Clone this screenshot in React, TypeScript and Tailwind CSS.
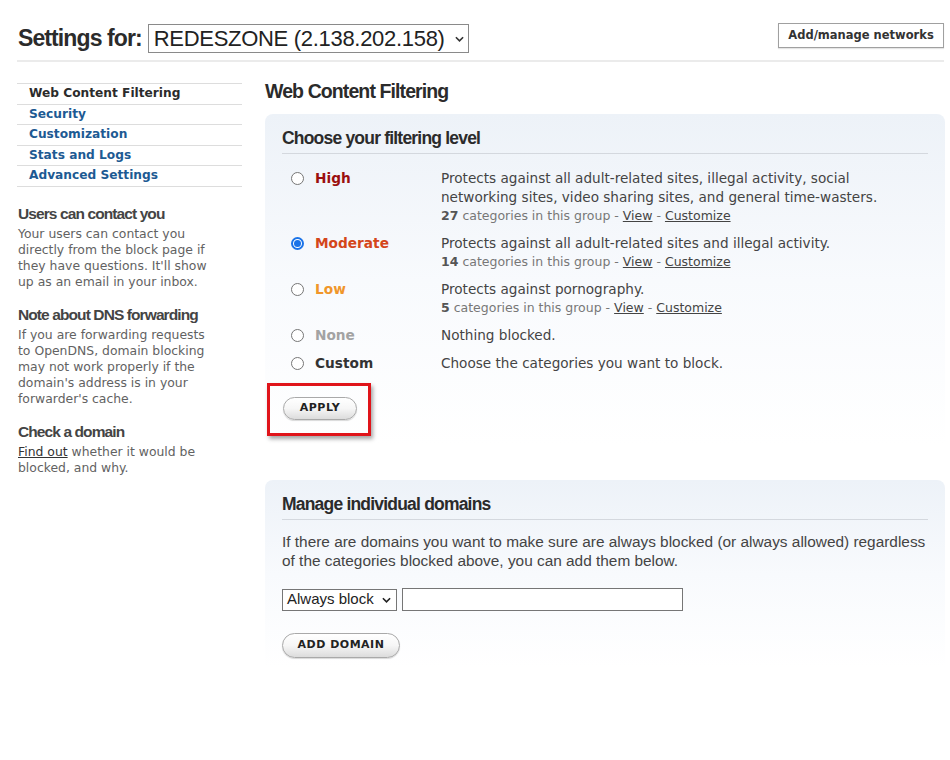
import React from "react";

const verdana = { fontFamily: '"DejaVu Sans", Verdana, sans-serif' };
const arial = { fontFamily: '"Liberation Sans", Arial, sans-serif' };

function Chevron({ className }: { className?: string }) {
  return (
    <svg viewBox="0 0 10 6" className={className} fill="none" stroke="currentColor" strokeWidth="1.8">
      <path d="M1 1l4 4 4-4" />
    </svg>
  );
}

function Radio({ checked }: { checked?: boolean }) {
  if (checked) {
    return (
      <span className="flex h-[13px] w-[13px] items-center justify-center rounded-full border-2 border-[#1a73e8] bg-white">
        <span className="h-[7px] w-[7px] rounded-full bg-[#1a73e8]" />
      </span>
    );
  }
  return <span className="block h-[13px] w-[13px] rounded-full border border-[#767676] bg-white" />;
}

function PillButton({ children, className }: { children: React.ReactNode; className?: string }) {
  return (
    <button
      style={verdana}
      className={
        "block rounded-full border border-[#a9a9a9] bg-gradient-to-b from-white via-[#f6f6f6] to-[#dcdcdc] text-[11px] font-bold tracking-[0.5px] text-[#222] shadow-[0_1px_1px_rgba(0,0,0,0.15)] " +
        (className ?? "")
      }
    >
      {children}
    </button>
  );
}

const levels = [
  {
    name: "High",
    color: "text-[#9b0f0f]",
    desc: "Protects against all adult-related sites, illegal activity, social networking sites, video sharing sites, and general time-wasters.",
    count: "27",
  },
  {
    name: "Moderate",
    color: "text-[#d4461a]",
    desc: "Protects against all adult-related sites and illegal activity.",
    count: "14",
    checked: true,
  },
  {
    name: "Low",
    color: "text-[#f0962a]",
    desc: "Protects against pornography.",
    count: "5",
  },
  { name: "None", color: "text-[#a3a3a3]", desc: "Nothing blocked." },
  { name: "Custom", color: "text-[#333]", desc: "Choose the categories you want to block." },
];

const nav = ["Web Content Filtering", "Security", "Customization", "Stats and Logs", "Advanced Settings"];

export default function App() {
  return (
    <div className="min-h-[760px] w-[950px] bg-white text-[#333]">
      {/* header */}
      <div className="flex items-start justify-between pl-[18px] pr-[6px] pt-[24px]">
        <div className="flex items-center gap-[6px]">
          <h1 style={arial} className="text-[23px] font-bold leading-[29px] tracking-[-0.9px] text-[#2b2b2b]">
            Settings for:
          </h1>
          <div
            style={arial}
            className="flex h-[29px] w-[321px] items-center justify-between border border-[#8a8a8a] pl-[5px] pr-[4px] text-[22px] text-[#222]"
          >
            <span className="tracking-[-0.3px]">REDESZONE (2.138.202.158)</span>
            <Chevron className="h-[6px] w-[9px] text-[#333]" />
          </div>
        </div>
        <button
          style={verdana}
          className="-mt-[1px] h-[25px] w-[166px] border border-[#a0a0a0] bg-white text-[11.5px] font-bold text-[#333] shadow-[0_1px_1px_rgba(0,0,0,0.1)]"
        >
          Add/manage networks
        </button>
      </div>
      <div className="ml-[17px] mr-[6px] mt-[7px] h-[2px] bg-[#ebebeb]" />

      <div className="mt-[19px] flex">
        {/* sidebar */}
        <aside className="ml-[17px] w-[225px] shrink-0">
          <ul style={verdana} className="mt-[2px] border-b border-[#ddd]">
            {nav.map((n, i) => (
              <li
                key={n}
                className={
                  "h-[20.5px] border-t border-[#ddd] pl-[12px] text-[12.2px] font-bold leading-[19px] " +
                  (i === 0 ? "text-[#2b2b2b]" : "text-[#1d5a93]")
                }
              >
                {n}
              </li>
            ))}
          </ul>

          <div className="mt-[15px] w-[196px] space-y-[13px] pl-[1px]">
            <section>
              <h3 style={arial} className="text-[15.5px] font-bold tracking-[-0.9px] text-[#444]">
                Users can contact you
              </h3>
              <p style={verdana} className="mt-[1px] text-[12.4px] leading-[16px] text-[#626262]">
                Your users can contact you directly from the block page if they have questions. It'll show up as an email in your inbox.
              </p>
            </section>
            <section>
              <h3 style={arial} className="text-[15.5px] font-bold tracking-[-0.9px] text-[#444]">
                Note about DNS forwarding
              </h3>
              <p style={verdana} className="mt-[1px] text-[12.4px] leading-[16px] text-[#626262]">
                If you are forwarding requests to OpenDNS, domain blocking may not work properly if the domain's address is in your forwarder's cache.
              </p>
            </section>
            <section>
              <h3 style={arial} className="text-[15.5px] font-bold tracking-[-0.9px] text-[#444]">
                Check a domain
              </h3>
              <p style={verdana} className="mt-[1px] text-[12.4px] leading-[16px] text-[#626262]">
                <span className="text-[#333] underline">Find out</span> whether it would be blocked, and why.
              </p>
            </section>
          </div>
        </aside>

        {/* main */}
        <main className="ml-[23px] mr-[5px] flex-1">
          <h2 style={arial} className="text-[19.5px] font-bold leading-[20px] tracking-[-0.9px] text-[#2b2b2b]">
            Web Content Filtering
          </h2>

          <div className="mt-[13px] rounded-t-[8px] bg-gradient-to-b from-[#edf2f8] via-[#f8fafd] to-white px-[17px] pb-[10px] pt-[12px]">
            <h3 style={arial} className="text-[17.5px] font-bold leading-[24px] tracking-[-0.8px] text-[#2b2b2b]">
              Choose your filtering level
            </h3>
            <div className="mt-[3px] h-px bg-[#d4d8de]" />

            <div style={verdana} className="mt-[15px] space-y-[9px]">
              {levels.map((l) => (
                <div key={l.name} className="flex">
                  <div className="flex w-[159px] shrink-0 items-start">
                    <span className="ml-[9px] mt-[3px]">
                      <Radio checked={l.checked} />
                    </span>
                    <span className={"ml-[11px] text-[13.7px] font-bold leading-[19px] " + l.color}>{l.name}</span>
                  </div>
                  <div className="max-w-[445px] flex-1">
                    <p className="text-[13.6px] leading-[19px] text-[#444]">{l.desc}</p>
                    {l.count && (
                      <p className="text-[12.5px] leading-[18px] text-[#777]">
                        <b className="text-[#555]">{l.count}</b> categories in this group -{" "}
                        <span className="text-[#444] underline">View</span> -{" "}
                        <span className="text-[#444] underline">Customize</span>
                      </p>
                    )}
                  </div>
                </div>
              ))}
            </div>

            <div className="mt-[10px] -ml-[15px] flex w-fit border-[3px] border-[#e0141a] pb-[13px] pl-[13px] pr-[11px] pt-[11px] shadow-[2px_3px_4px_rgba(0,0,0,0.35)]">
              <PillButton className="h-[23px] w-[74px]">APPLY</PillButton>
            </div>
          </div>

          <div className="mt-[34px] rounded-t-[8px] bg-gradient-to-b from-[#edf2f8] via-[#f8fafd] to-white px-[17px] pb-[10px] pt-[12px]">
            <h3 style={arial} className="text-[17.5px] font-bold leading-[24px] tracking-[-0.8px] text-[#2b2b2b]">
              Manage individual domains
            </h3>
            <div className="mt-[3px] h-px bg-[#d4d8de]" />
            <p style={arial} className="mt-[12px] text-[15.4px] leading-[19px] text-[#444]">
              <span className="block whitespace-nowrap">
                If there are domains you want to make sure are always blocked (or always allowed) regardless
              </span>
              <span className="block whitespace-nowrap">of the categories blocked above, you can add them below.</span>
            </p>
            <div className="mt-[18px] flex items-center gap-[5px]">
              <div
                style={arial}
                className="flex h-[22px] w-[115px] items-center justify-between border border-[#767676] bg-white pl-[4px] pr-[5px] text-[15px] text-[#222]"
              >
                <span>Always block</span>
                <Chevron className="h-[6px] w-[9px] text-[#222]" />
              </div>
              <div className="h-[23px] w-[281px] border border-[#767676] bg-white" />
            </div>
            <PillButton className="mt-[22px] h-[25px] w-[118px]">ADD DOMAIN</PillButton>
          </div>
        </main>
      </div>
    </div>
  );
}
